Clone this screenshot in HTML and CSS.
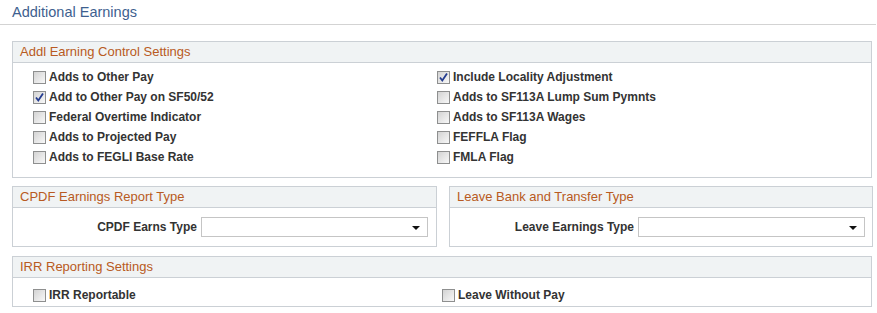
FILE: index.html
```html
<!DOCTYPE html>
<html>
  <head>
    <title>Additional Earnings</title>
    <link rel="stylesheet" href="styles.css">
  </head>

  <body>
    <h1 class="page-title">Additional Earnings</h1>

    <div class="group">
      <div class="group-head">Addl Earning Control Settings</div>
      <div class="group-body checks">
        <div class="col">
          <label class="check"><span class="box"></span>Adds to Other Pay</label>
          <label class="check"><span class="box on"><svg viewBox="0 0 11 11"><path d="M2 5.5 L4.3 8.5 L9 1.5" /></svg></span>Add to Other Pay on SF50/52</label>
          <label class="check"><span class="box"></span>Federal Overtime Indicator</label>
          <label class="check"><span class="box"></span>Adds to Projected Pay</label>
          <label class="check"><span class="box"></span>Adds to FEGLI Base Rate</label>
        </div>
        <div class="col">
          <label class="check"><span class="box on"><svg viewBox="0 0 11 11"><path d="M2 5.5 L4.3 8.5 L9 1.5" /></svg></span>Include Locality Adjustment</label>
          <label class="check"><span class="box"></span>Adds to SF113A Lump Sum Pymnts</label>
          <label class="check"><span class="box"></span>Adds to SF113A Wages</label>
          <label class="check"><span class="box"></span>FEFFLA Flag</label>
          <label class="check"><span class="box"></span>FMLA Flag</label>
        </div>
      </div>
    </div>

    <div class="pair">
      <div class="group">
        <div class="group-head">CPDF Earnings Report Type</div>
        <div class="group-body field">
          <span class="field-label">CPDF Earns Type</span>
          <span class="select"><span class="arrow"></span></span>
        </div>
      </div>
      <div class="group">
        <div class="group-head">Leave Bank and Transfer Type</div>
        <div class="group-body field">
          <span class="field-label">Leave Earnings Type</span>
          <span class="select"><span class="arrow"></span></span>
        </div>
      </div>
    </div>

    <div class="group">
      <div class="group-head">IRR Reporting Settings</div>
      <div class="group-body irr">
        <label class="check"><span class="box"></span>IRR Reportable</label>
        <label class="check"><span class="box"></span>Leave Without Pay</label>
      </div>
    </div>
  </body>
</html>
```

FILE: styles.css
```css
/* additional earnings page */
body {
  margin: 0;
  font-family: "Liberation Sans", Arial, sans-serif;
  font-size: 12px;
  color: #333;
  background: #fff;
}

.page-title {
  margin: 0 1px 0 0;
  height: 25px;
  padding-left: 12px;
  box-sizing: border-box;
  font-size: 14.5px;
  font-weight: normal;
  line-height: 24px;
  color: #3e5f8f;
  border-bottom: 1px solid #d3d3d3;
}

.group {
  border: 1px solid #cbd0d5;
  margin: 16px 5px 0 12px;
}

.group-head {
  height: 20px;
  line-height: 20px;
  padding-left: 7px;
  font-size: 13px;
  color: #b85a22;
  background: #f0f3f4;
  border-bottom: 1px solid #cbd0d5;
}

.checks {
  display: grid;
  grid-template-columns: 404px 1fr;
  padding: 4px 0 10px 20px;
}

.check {
  display: flex;
  align-items: center;
  height: 20px;
  font-weight: bold;
}

.box {
  width: 13px;
  height: 13px;
  box-sizing: border-box;
  border: 1px solid #8e8f8f;
  background: linear-gradient(135deg, #d3d3d3, #f8f8f8);
  margin-right: 3px;
  display: flex;
  align-items: center;
  justify-content: center;
}

.box svg {
  width: 11px;
  height: 11px;
}

.box svg path {
  fill: none;
  stroke: #243c8f;
  stroke-width: 1.8;
}

.pair {
  display: grid;
  grid-template-columns: 425px 424px;
  column-gap: 12px;
  margin: 8px 5px 0 12px;
}

.pair .group {
  margin: 0;
}

.field {
  display: flex;
  align-items: center;
  height: 38px;
}

.field-label {
  width: 184px;
  text-align: right;
  font-weight: bold;
  padding-right: 4px;
}

.select {
  position: relative;
  width: 227px;
  height: 20px;
  box-sizing: border-box;
  border: 1px solid #c5c5c5;
  background: #fff;
}

.arrow {
  position: absolute;
  right: 7px;
  top: 8px;
  border-left: 4px solid transparent;
  border-right: 4px solid transparent;
  border-top: 4px solid #111;
}

.pair + .group {
  margin-top: 9px;
}

.irr {
  display: grid;
  grid-template-columns: 409px 1fr;
  padding: 7px 0 1px 20px;
}
```
